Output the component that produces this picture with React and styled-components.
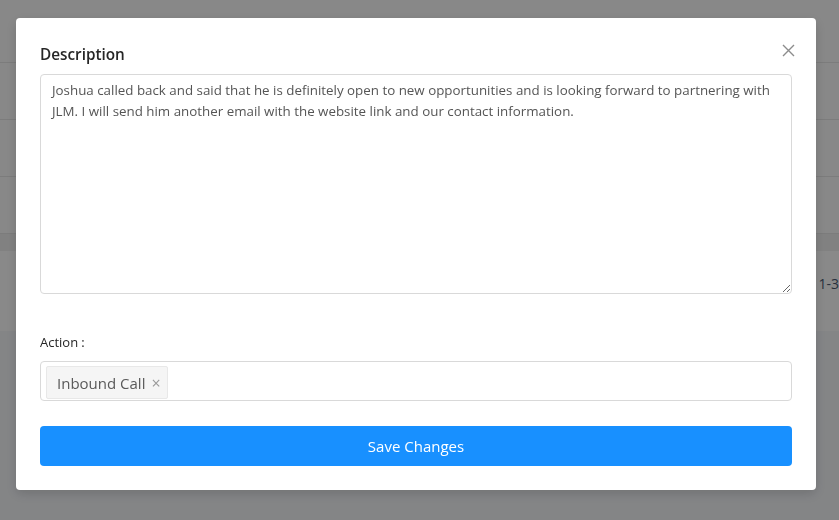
import React from 'react';
import styled, { createGlobalStyle } from 'styled-components';

const GlobalStyle = createGlobalStyle`
  html, body {
    margin: 0;
    padding: 0;
    height: 100%;
    background: #f0f2f5;
    font-family: "Open Sans", "Liberation Sans", sans-serif;
  }
`;

const Page = styled.div`
  min-height: 520px;
  background: #f0f2f5;
`;

const Sheet = styled.div`
  background: #f8f8f8;
`;

const SheetRow = styled.div`
  height: ${(p) => p.h}px;
  border-bottom: 1px solid #e2e2e2;
`;

const HeadBand = styled.div`
  height: 17px;
  background: #ececec;
`;

const PagerRow = styled.div`
  height: 80px;
  box-sizing: border-box;
  padding-bottom: 16px;
  display: flex;
  align-items: center;
  justify-content: flex-end;
  font-size: 14px;
  color: #4a5870;
  background: #fafafa;
`;

const Mask = styled.div`
  position: fixed;
  inset: 0;
  background: rgba(0, 0, 0, 0.45);
  padding: 18px 0 0 16px;
`;

const Modal = styled.div`
  position: relative;
  width: 800px;
  box-sizing: border-box;
  background: #fff;
  border-radius: 4px;
  box-shadow: 0 4px 12px rgba(0, 0, 0, 0.15);
  padding: 24px;
  display: flex;
  flex-direction: column;
`;

const Close = styled.button`
  position: absolute;
  top: 20px;
  right: 16px;
  width: 24px;
  height: 24px;
  padding: 0;
  border: 0;
  background: none;
  display: flex;
  align-items: center;
  justify-content: center;
  cursor: pointer;
`;

const Title = styled.div`
  font-size: 15.3px;
  font-weight: 600;
  color: #262626;
  line-height: 24px;
  margin-bottom: 8px;
`;

const TextArea = styled.textarea`
  display: block;
  width: 100%;
  height: 220px;
  box-sizing: border-box;
  border: 1px solid #d9d9d9;
  border-radius: 4px;
  padding: 5px 11px;
  font-family: "Open Sans", "Liberation Sans", sans-serif;
  font-size: 13.35px;
  line-height: 21px;
  color: #555;
  resize: vertical;
  outline: none;
`;

const FieldLabel = styled.div`
  margin-top: 37px;
  font-size: 13px;
  line-height: 22px;
  color: #262626;
  margin-bottom: 8px;
`;

const Colon = styled.span`
  margin-left: 3px;
`;

const Select = styled.div`
  height: 40px;
  box-sizing: border-box;
  border: 1px solid #d9d9d9;
  border-radius: 4px;
  padding: 4px 5px;
  display: flex;
  align-items: flex-start;
`;

const Tag = styled.span`
  height: 33px;
  box-sizing: border-box;
  display: inline-flex;
  align-items: center;
  gap: 6px;
  padding: 0 6px 0 10px;
  background: #f5f5f5;
  border: 1px solid #e8e8e8;
  border-radius: 2px;
  font-size: 15px;
  color: #595959;
`;

const TagClose = styled.span`
  font-size: 16px;
  color: #999;
  line-height: 1;
`;

const SaveButton = styled.button`
  margin-top: 25px;
  height: 40px;
  border: 0;
  border-radius: 4px;
  background: #1890ff;
  color: #fff;
  font-family: "Open Sans", "Liberation Sans", sans-serif;
  font-size: 15px;
  cursor: pointer;
`;

export default function App() {
  return (
    <>
      <GlobalStyle />
      <Page>
        <Sheet>
          <SheetRow h={62} />
          <SheetRow h={56} />
          <SheetRow h={56} />
          <SheetRow h={56} />
          <HeadBand />
          <PagerRow>1-3</PagerRow>
        </Sheet>
      </Page>
      <Mask>
        <Modal>
          <Close aria-label="Close">
            <svg width="13" height="13" viewBox="0 0 13 13">
              <path d="M1 1L12 12M12 1L1 12" stroke="#8c8c8c" strokeWidth="1.4" fill="none" />
            </svg>
          </Close>
          <Title>Description</Title>
          <TextArea
            readOnly
            defaultValue="Joshua called back and said that he is definitely open to new opportunities and is looking forward to partnering with JLM. I will send him another email with the website link and our contact information."
          />
          <FieldLabel>
            Action<Colon>:</Colon>
          </FieldLabel>
          <Select>
            <Tag>
              Inbound Call
              <TagClose>×</TagClose>
            </Tag>
          </Select>
          <SaveButton>Save Changes</SaveButton>
        </Modal>
      </Mask>
    </>
  );
}
